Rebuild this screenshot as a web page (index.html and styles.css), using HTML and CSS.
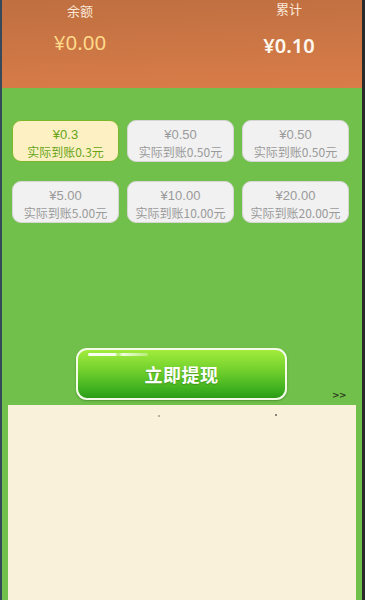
FILE: index.html
```html
<!DOCTYPE html>
<html lang="zh">
<head>
<meta charset="utf-8">
<link rel="stylesheet" href="styles.css">
</head>
<body>
<div class="page">
  <header class="summary">
    <div class="stat stat-left">
      <div class="stat-label">余额</div>
      <div class="stat-value balance">¥0.00</div>
    </div>
    <div class="stat stat-right">
      <div class="stat-label">累计</div>
      <div class="stat-value total">¥0.10</div>
    </div>
  </header>
  <main class="main">
    <div class="options">
      <div class="opt selected"><span class="amt">¥0.3</span><span class="got">实际到账0.3元</span></div>
      <div class="opt"><span class="amt">¥0.50</span><span class="got">实际到账0.50元</span></div>
      <div class="opt"><span class="amt">¥0.50</span><span class="got">实际到账0.50元</span></div>
      <div class="opt"><span class="amt">¥5.00</span><span class="got">实际到账5.00元</span></div>
      <div class="opt"><span class="amt">¥10.00</span><span class="got">实际到账10.00元</span></div>
      <div class="opt"><span class="amt">¥20.00</span><span class="got">实际到账20.00元</span></div>
    </div>
    <div class="action">
      <button class="withdraw"><span class="shine"></span>立即提现</button>
      <span class="more">&gt;&gt;</span>
    </div>
    <section class="records">
      <span class="dot dot-a"></span>
      <span class="dot dot-b"></span>
    </section>
  </main>
</div>
</body>
</html>
```
FILE: styles.css
```css
html, body {
  margin: 0;
  padding: 0;
  height: 100%;
}
body {
  font-family: "Noto Sans CJK SC", "Noto Sans", "Liberation Sans", sans-serif;
  background: #2b2b2b;
}
.page {
  box-sizing: border-box;
  height: 600px;
  border-left: 2px solid #36495a;
  border-right: 3px solid #2a2a2a;
  display: flex;
  flex-direction: column;
  background: #71c04b;
  overflow: hidden;
}
.summary {
  height: 88px;
  flex: none;
  background: linear-gradient(178deg, #bf6f41 0%, #d97d49 100%);
  display: flex;
  justify-content: space-between;
  padding: 0 23px 0 28px;
}
.stat {
  width: 100px;
  display: flex;
  flex-direction: column;
  align-items: center;
}
.stat-label {
  color: #fbe9da;
  font-size: 13px;
  line-height: 17px;
}
.stat-left .stat-label { margin-top: 2px; }
.stat-right .stat-label { margin-top: 0; }
.stat-value {
  font-family: "Noto Sans", "Liberation Sans", sans-serif;
  font-size: 20.5px;
  line-height: 24px;
}
.balance {
  color: #ffd98a;
  margin-top: 11px;
}
.total {
  color: #fff8ef;
  font-weight: 600;
  font-size: 20px;
  margin-top: 17px;
}
.main {
  flex: 1;
  display: flex;
  flex-direction: column;
}
.options {
  display: grid;
  grid-template-columns: repeat(3, 107px);
  column-gap: 8px;
  row-gap: 19px;
  padding: 32px 0 0 10px;
}
.opt {
  box-sizing: border-box;
  height: 42px;
  border-radius: 9px;
  background: #f1f1f1;
  border: 1.5px solid #d6d6d6;
  color: #9a9a9a;
  display: flex;
  flex-direction: column;
  align-items: center;
  justify-content: flex-start;
  padding-top: 6px;
}
.amt {
  display: block;
  font-family: "Liberation Sans", "Noto Sans", sans-serif;
  font-size: 13px;
  line-height: 16px;
}
.got {
  display: block;
  font-size: 12px;
  line-height: 17px;
}
.opt.selected {
  background: #fdf1c3;
  border-color: #7bb72c;
  color: #67a418;
}
.action {
  margin-top: 124px;
  height: 58px;
  display: flex;
  align-items: flex-start;
  position: relative;
}
.withdraw {
  position: relative;
  margin: 1px 0 0 74px;
  width: 211px;
  height: 52px;
  box-sizing: border-box;
  border: 2.5px solid #f4fbe8;
  border-radius: 11px;
  background: linear-gradient(180deg, #a2ec3c 0%, #6fce2c 45%, #3aae1e 85%, #2c9a18 100%);
  box-shadow: 0 1px 2px rgba(40, 90, 20, 0.45);
  color: #ffffff;
  font-family: "Noto Sans CJK SC", sans-serif;
  font-weight: 700;
  font-size: 18px;
  letter-spacing: 0.5px;
  text-shadow: 0 1px 1px rgba(40, 100, 20, 0.4);
  padding: 0;
}
.shine {
  position: absolute;
  left: 10px;
  top: 3px;
  width: 60px;
  height: 3px;
  border-radius: 2px;
  background: linear-gradient(90deg, rgba(255,255,255,0.95) 0%, rgba(255,255,255,0.9) 45%, rgba(255,255,255,0.2) 50%, rgba(255,255,255,0.85) 58%, rgba(255,255,255,0.3) 100%);
}
.more {
  position: absolute;
  left: 330px;
  top: 43px;
  font-family: "DejaVu Sans", sans-serif;
  font-size: 9px;
  font-weight: 700;
  color: #2d3a1c;
  letter-spacing: -0.5px;
}
.records {
  flex: 1;
  margin: 0 6px 0 6px;
  background: #f9f1da;
  position: relative;
}
.dot {
  position: absolute;
  width: 2px;
  height: 2px;
  background: #b8b2a2;
}
.dot-a { left: 150px; top: 10px; }
.dot-b { left: 267px; top: 9px; background: #8a8578; }
```
